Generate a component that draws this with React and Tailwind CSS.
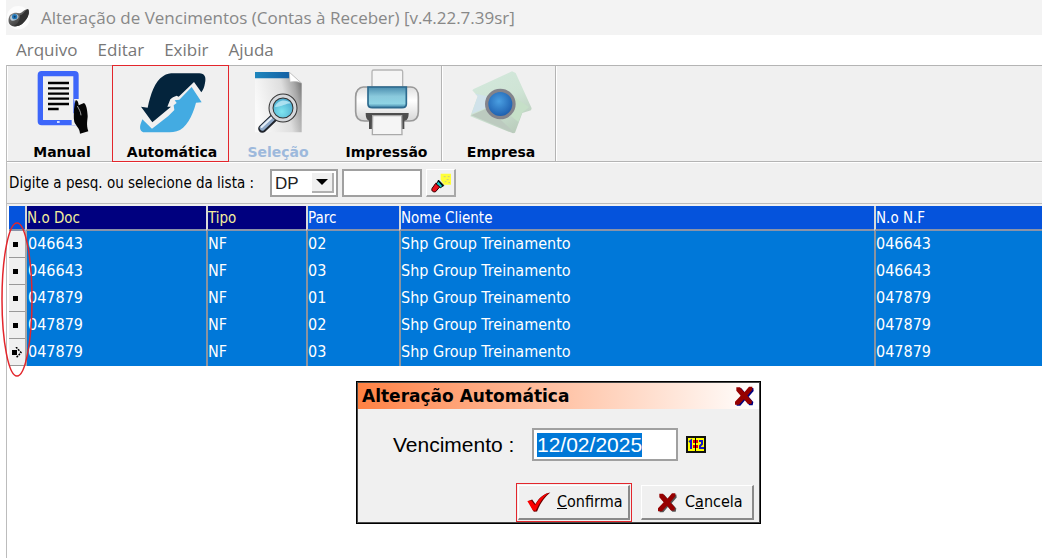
import { useEffect, useRef } from "react";

const TAHOMA = "font-['DejaVu_Sans_Condensed','DejaVu_Sans',sans-serif]";
const TAHOMA_WIDE = "font-['DejaVu_Sans',sans-serif]";
const SEGOE = "font-['Open_Sans','Noto_Sans',sans-serif]";
const ARIAL = "font-['Liberation_Sans',sans-serif]";

const rows = [
  ["046643", "NF", "02", "Shp Group Treinamento", "046643"],
  ["046643", "NF", "03", "Shp Group Treinamento", "046643"],
  ["047879", "NF", "01", "Shp Group Treinamento", "047879"],
  ["047879", "NF", "02", "Shp Group Treinamento", "047879"],
  ["047879", "NF", "03", "Shp Group Treinamento", "047879"],
];

function AppLogo() {
  return (
    <svg viewBox="20 16 72 72" className="h-6 w-6" aria-hidden="true">
      <defs>
        <linearGradient id="logoBody" x1="0" y1="0" x2="0.7" y2="1">
          <stop offset="0" stopColor="#c4c4c4" />
          <stop offset="0.4" stopColor="#6a6a6a" />
          <stop offset="1" stopColor="#2a2a2a" />
        </linearGradient>
      </defs>
      <circle cx="57" cy="51" r="35" fill="#fcfcfc" />
      <path d="M29 50C32 38 48 34 60 38C70 36 74 26 86 25C93 34 86 56 68 70C54 80 34 80 29 68C27 62 27 56 29 50Z" fill="url(#logoBody)" />
      <path d="M62 44C72 42 76 30 86 25C93 34 86 56 68 70C60 76 50 78 44 76C56 70 62 58 62 44Z" fill="#333" />
      <ellipse cx="45" cy="50" rx="13" ry="9" transform="rotate(-25 45 50)" fill="#b9c9d4" />
      <circle cx="46" cy="48" r="8" fill="#2377b8" />
      <circle cx="46" cy="48" r="3" fill="#0d3b66" />
    </svg>
  );
}

function ManualIcon() {
  return (
    <svg viewBox="96 207 180 201" className="h-[67px] w-[60px]" aria-hidden="true">
      <rect x="121" y="221" width="107" height="147" rx="4" fill="#f0f0f0" stroke="#3d66fa" strokeWidth="16" />
      <path d="M121 360H228V370H121Z" fill="#3d66fa" />
      <path d="M144 249H207M144 265H207M144 281H207M144 296H207M144 312H207M144 327H176" stroke="#000" strokeWidth="7" />
      <path d="M171 366h8" stroke="#cfd9ff" strokeWidth="6" />
      <path d="M222 297H245V340H215V375H238" fill="#f0f0f0" />
      <path d="M226 302C232 298 235 306 236 316L252 309C259 312 262 332 263 348C263 360 258 372 265 394L240 401C240 386 228 378 223 366C220 354 222 340 222 328Z" fill="#050505" />
      <path d="M232 318C237 328 242 334 243 346" stroke="#eee" strokeWidth="2" fill="none" />
    </svg>
  );
}

function AutomaticIcon() {
  return (
    <svg viewBox="408 207 219 201" className="h-[67px] w-[73px]" aria-hidden="true">
      <path d="M423 320L443 323C452 282 464 244 490 228C500 221 510 220 522 220H598C614 220 619 232 615 249C613 262 609 270 604 277L582 246L536 290L530 287L519 292L511 298L502 320H513L457 367Z" fill="#04243c" />
      <path d="M575 261L605 307L588 308C577 350 558 385 530 394C523 396 516 397 508 397H434C421 397 417 384 423 369L427 358L456 386L505 348L523 330L521 316L530 309L524 301L538 299Z" fill="#43abe2" />
    </svg>
  );
}

function SelectionIcon() {
  return (
    <svg viewBox="67 207 165 201" className="h-[67px] w-[55px]" aria-hidden="true">
      <defs>
        <linearGradient id="selPage" x1="0" y1="0.5" x2="1" y2="0.2">
          <stop offset="0" stopColor="#fafafa" />
          <stop offset="0.6" stopColor="#dedede" />
          <stop offset="0.85" stopColor="#a8a8a8" />
          <stop offset="1" stopColor="#777" />
        </linearGradient>
        <linearGradient id="selBar" x1="0" x2="1">
          <stop offset="0" stopColor="#1e86bd" />
          <stop offset="1" stopColor="#1460a4" />
        </linearGradient>
        <radialGradient id="selLens" cx="0.45" cy="0.65" r="0.6">
          <stop offset="0" stopColor="#7fe5f0" />
          <stop offset="1" stopColor="#48a5cb" />
        </radialGradient>
      </defs>
      <path d="M79 216H182L219 250V397H79Z" fill="url(#selPage)" />
      <path d="M79 216H182V235H79Z" fill="url(#selBar)" />
      <path d="M182 217L218 249C205 243 192 244 184 246Z" fill="#fff" stroke="#bbb" strokeWidth="2" />
      <path d="M137 352L101 386" stroke="#20242c" strokeWidth="25" strokeLinecap="round" />
      <path d="M137 350L101 384" stroke="#8fa9c8" strokeWidth="16" strokeLinecap="round" />
      <path d="M131 351L99 381" stroke="#e7eff8" strokeWidth="6" strokeLinecap="round" />
      <circle cx="163" cy="324" r="36" fill="url(#selLens)" stroke="#333" strokeWidth="15" />
      <circle cx="163" cy="324" r="36" fill="none" stroke="#d5d8dc" strokeWidth="9" />
      <path d="M139 321C145 302 169 294 187 310C171 310 158 322 139 321Z" fill="#b9e6f4" opacity="0.85" />
    </svg>
  );
}

function PrinterIcon() {
  return (
    <svg viewBox="370 207 204 201" className="h-[67px] w-[68px]" aria-hidden="true">
      <defs>
        <linearGradient id="prnBody" x1="0" y1="0" x2="0" y2="1">
          <stop offset="0" stopColor="#dedede" />
          <stop offset="0.4" stopColor="#fff" />
          <stop offset="1" stopColor="#d6d6d6" />
        </linearGradient>
        <linearGradient id="prnGlass" x1="0" y1="0" x2="0" y2="1">
          <stop offset="0" stopColor="#4a8dae" />
          <stop offset="0.45" stopColor="#8ac9dc" />
          <stop offset="0.8" stopColor="#8fd4e4" />
          <stop offset="1" stopColor="#3d82a6" />
        </linearGradient>
      </defs>
      <rect x="427" y="210" width="92" height="70" rx="5" fill="#f5f5f5" stroke="#b5b5b5" strokeWidth="4" />
      <path d="M401 261H543C558 261 566 274 566 290V335C566 353 556 363 540 363H405C388 363 378 354 378 335V290C378 274 388 261 401 261Z" fill="url(#prnBody)" stroke="#999" strokeWidth="5" />
      <path d="M408 339H537C537 355 532 362 524 362V387H418V362C411 360 408 352 408 339Z" fill="#4d4d4d" />
      <path d="M429 347H516L517 404H428Z" fill="#f5f5f5" stroke="#aaa" strokeWidth="4" />
      <path d="M415 261H530V312C530 319 525 323 517 323H428C420 323 415 319 415 312Z" fill="url(#prnGlass)" stroke="#2d6a8e" strokeWidth="5" />
    </svg>
  );
}

function CompanyIcon() {
  return (
    <svg viewBox="6 6 204 201" className="h-[67px] w-[68px]" aria-hidden="true">
      <defs>
        <linearGradient id="coHouse" x1="0.2" y1="0" x2="0.7" y2="1">
          <stop offset="0" stopColor="#d3e8dc" />
          <stop offset="0.5" stopColor="#cfe4d5" />
          <stop offset="1" stopColor="#b9ccbb" />
        </linearGradient>
        <radialGradient id="coEye" cx="0.45" cy="0.4" r="0.65">
          <stop offset="0" stopColor="#4a9fe2" />
          <stop offset="1" stopColor="#1654a6" />
        </radialGradient>
      </defs>
      <path d="M141 13L152 18L200 124L198 130L172 138L150 197L144 199L16 148L38 88L22 70L26 66Z" fill="url(#coHouse)" />
      <path d="M38 88L30 80L90 92L70 120L20 140Z" fill="#d0e2ea" />
      <path d="M18 145L70 122L148 198Z" fill="#bccabf" />
      <path d="M146 90L192 120L171 137L160 165L130 140Z" fill="#c6e0c8" />
      <circle cx="106" cy="111" r="41" fill="url(#coEye)" stroke="#83838b" strokeWidth="10" />
    </svg>
  );
}

function FlashlightIcon() {
  return (
    <svg viewBox="508 38 66 64" className="h-[22px] w-[22px]" aria-hidden="true">
      <path d="M540 42H571V75H549L540 60Z" fill="#ffff37" />
      <path d="M549 51h6m6 0h6m-9 9h6m-12 6h5m6 3h5" stroke="#c9c98a" strokeWidth="3" />
      <path d="M534 62L549 77L540 84L526 74Z" fill="#1cc" stroke="#000" strokeWidth="3" />
      <path d="M525 71L537 82L525 96C517 99 510 92 515 85Z" fill="#e8101c" stroke="#2a0000" strokeWidth="3" />
      <path d="M532 62L548 80" stroke="#000" strokeWidth="4" />
    </svg>
  );
}

function CrossIcon({ shadow, className }) {
  return (
    <svg viewBox="0 0 60 60" className={className} aria-hidden="true">
      <path d="M12 7H22L35 22L49 6H58L59 15L44 32L58 48L56 58H46L33 43L19 59H8L7 50L24 32L12 17Z" fill={shadow} />
      <path d="M7 4H18L31 19L45 2H55V11L40 29L54 45L52 54H42L30 40L15 56H3V47L20 29L7 14Z" fill="#960000" />
    </svg>
  );
}

function CheckIcon() {
  return (
    <svg viewBox="528 349 74 66" className="h-[22px] w-6" aria-hidden="true">
      <path d="M532 379L544 374L554 388C566 369 580 356 600 353C582 368 570 385 559 411L549 412Z" fill="#6b0000" />
      <path d="M529 379L541 377L553 392C564 372 577 360 594 354C577 368 565 386 555 409L546 408Z" fill="#fb0000" />
    </svg>
  );
}

function CalendarIcon() {
  return (
    <svg viewBox="0 0 20 17" className="h-[17px] w-5" aria-hidden="true">
      <rect x="1" y="1" width="18" height="15" fill="#ffff00" stroke="#111" strokeWidth="2" />
      <path d="M3 6L5 4.500V13" fill="none" stroke="#1616c8" strokeWidth="2" />
      <path d="M13 5H16V8L14 10V12H18" fill="none" stroke="#1616c8" strokeWidth="2" />
      <path d="M7 4H12V7H7ZM7 9H12V12H7Z" fill="#e50000" />
      <path d="M9.500 2V15" stroke="#000" />
    </svg>
  );
}

function ToolButton({ label, icon, className = "", labelClass = "text-black", disabled, children }) {
  return (
    <button type="button" disabled={disabled} className={`relative flex flex-col items-center pt-[3px] ${className}`}>
      <span className="flex h-[67px] items-center">{icon}</span>
      <span className={`mt-1.5 text-[14px] leading-5 font-bold ${TAHOMA_WIDE} ${labelClass}`}>{label}</span>
      {children}
    </button>
  );
}

function HeaderCell({ children, className }) {
  return (
    <th scope="col" className={`border-b-2 border-l-2 border-b-[#8a93a8] border-l-[#d8d8d8] p-0 text-left font-normal ${className}`}>
      {children}
    </th>
  );
}

function RecordsTable() {
  return (
    <div className="relative pl-0.5">
      <table className="w-full table-fixed border-separate border-spacing-0 text-[16px] leading-5 text-white">
        <colgroup>
          <col className="w-4" />
          <col className="w-[181px]" />
          <col className="w-[100px]" />
          <col className="w-[93px]" />
          <col className="w-[475px]" />
          <col />
        </colgroup>
        <thead className="text-[15px]">
          <tr className="h-[25px]">
            <td className="border-b-2 border-b-[#8a93a8] bg-[#0553dc] p-0" />
            <HeaderCell className="bg-[#00007f] text-[#f3ee9c]">N.o Doc</HeaderCell>
            <HeaderCell className="bg-[#00007f] text-[#f3ee9c]">Tipo</HeaderCell>
            <HeaderCell className="bg-[#0553dc]">Parc</HeaderCell>
            <HeaderCell className="bg-[#0553dc]">Nome Cliente</HeaderCell>
            <HeaderCell className="bg-[#0553dc]">N.o N.F</HeaderCell>
          </tr>
        </thead>
        <tbody>
          {rows.map((row, r) => (
            <tr key={r} className="h-[27px] bg-[#0078d9]">
              <td className="border-b border-b-[#999] bg-[#f0f0f0] p-0">
                {r === rows.length - 1 ? (
                  <svg viewBox="0 0 11 11" className="ml-[3px] h-[11px] w-[11px]" aria-hidden="true">
                    <path d="M0 3H5V8H0Z" fill="#000" />
                    <path d="M4 0L9 5.500L4 11" fill="none" stroke="#000" strokeWidth="1.500" strokeDasharray="2 1" />
                  </svg>
                ) : (
                  <span className="ml-1 block h-[5px] w-[5px] bg-black" />
                )}
              </td>
              {row.map((cell, c) => (
                <td key={c} className={`border-l-2 p-0 pb-0.5 ${c === 0 ? "border-l-[#a8a8a8] pl-px" : "border-l-[#8a93a0]"}`}>
                  {cell}
                </td>
              ))}
            </tr>
          ))}
        </tbody>
      </table>
      <svg viewBox="0 0 32 155" className="pointer-events-none absolute top-4 -left-[6px] h-[155px] w-8" aria-hidden="true">
        <ellipse cx="16" cy="77.500" rx="15" ry="76.500" fill="none" stroke="#e3262c" strokeWidth="1.500" />
      </svg>
    </div>
  );
}

function DueDateDialog() {
  const dateRef = useRef(null);
  useEffect(() => {
    dateRef.current.focus();
    dateRef.current.select();
  }, []);
  const raised = "flex h-[35px] items-center border-t border-l border-r-2 border-b-2 border-t-white border-l-white border-r-[#8a8a8a] border-b-[#8a8a8a] bg-[#f0f0f0] text-[16px]";
  return (
    <section
      role="dialog"
      aria-labelledby="dialog-title"
      className="absolute top-[381px] left-[356px] w-[405px] border border-black bg-[#f0f0f0] outline-1 -outline-offset-2 outline-black/70"
    >
      <header className="m-px flex h-[26px] items-center justify-between bg-linear-to-r from-[#ff8142] to-white pr-[5px] pl-1">
        <h2 id="dialog-title" className={`text-[17px] leading-6 font-bold text-black ${TAHOMA_WIDE}`}>Alteração Automática</h2>
        <button type="button" aria-label="Fechar">
          <CrossIcon shadow="#000080" className="h-5 w-5" />
        </button>
      </header>
      <div className={`mt-[19px] flex items-center pl-9 ${ARIAL}`}>
        <label htmlFor="due" className="w-[139px] text-[21px] leading-8 text-black">Vencimento :</label>
        <input
          id="due"
          ref={dateRef}
          defaultValue="12/02/2025"
          className="h-[33px] w-[146px] border-2 border-[#a0a0a0] bg-white px-[3px] text-[21px] leading-6 text-black outline-none selection:bg-[#0078d7] selection:text-white"
        />
        <button type="button" aria-label="Calendário" className="ml-2">
          <CalendarIcon />
        </button>
      </div>
      <footer className="mt-[22px] flex items-center justify-end gap-[9px] pr-1.5 pb-px">
        <div className="border border-[#e3262c] p-px">
          <button type="button" className={`${raised} w-[112px] gap-1.5 pl-2`}>
            <CheckIcon />
            <span><u>C</u>onfirma</span>
          </button>
        </div>
        <button type="button" className={`${raised} w-[113px] gap-2 pl-[15px]`}>
          <CrossIcon shadow="#555" className="h-[21px] w-5" />
          <span>C<u>a</u>ncela</span>
        </button>
      </footer>
    </section>
  );
}

export default function App() {
  return (
    <div className={`relative min-h-screen overflow-hidden bg-white pl-1.5 text-black ${TAHOMA}`}>
      <header className={`flex h-[35px] items-center gap-[11px] bg-[#f3f3f3] text-[17px] text-[#888] ${SEGOE}`}>
        <AppLogo />
        <h1>Alteração de Vencimentos (Contas à Receber) [v.4.22.7.39sr]</h1>
      </header>
      <nav className={`flex h-[30px] items-center gap-5 pl-[10px] text-[17px] text-[#777] ${SEGOE}`}>
        <button type="button">Arquivo</button>
        <button type="button">Editar</button>
        <button type="button">Exibir</button>
        <button type="button">Ajuda</button>
      </nav>
      <main className="border-l border-[#bcbcbc]">
        <div className="flex h-[97px] border-y border-[#b4b4b4] bg-[#f0f0f0]">
          <ToolButton label="Manual" icon={<ManualIcon />} className="w-[105px] border-l border-white pl-1" />
          <ToolButton label="Automática" icon={<AutomaticIcon />} className="w-[117px] pl-[3px]">
            <span className="pointer-events-none absolute -inset-y-px inset-x-0 border border-[#e3262c]" />
          </ToolButton>
          <ToolButton label="Seleção" icon={<SelectionIcon />} className="w-[98px]" labelClass="text-[#9db9dc]" disabled />
          <ToolButton label="Impressão" icon={<PrinterIcon />} className="w-[115px] border-r border-[#b4b4b4] pl-[5px]" />
          <ToolButton label="Empresa" icon={<CompanyIcon />} className="w-[114px] border-x border-l-white border-r-[#b4b4b4] pl-1" />
          <div className="border-l border-white" />
        </div>
        <form className="flex h-[41px] items-center border-t border-white bg-[#f0f0f0] pl-0.5" onSubmit={(e) => e.preventDefault()}>
          <label htmlFor="kind" className="w-[261px] text-[15px]">Digite a pesq. ou selecione da lista :</label>
          <div className="relative">
            <select id="kind" className={`h-7 w-[68px] appearance-none border-2 border-[#a0a0a0] bg-white pl-[3px] text-[17px] text-[#222] ${ARIAL}`}>
              <option>DP</option>
            </select>
            <span className="pointer-events-none absolute top-1 right-1 flex h-5 w-[22px] items-center justify-center border-r-2 border-b-2 border-[#b0b0b0] bg-[#f0f0f0]">
              <svg viewBox="0 0 12 6" className="h-1.5 w-3" aria-hidden="true"><path d="M0 0H12L6 6Z" fill="#000" /></svg>
            </span>
          </div>
          <input aria-label="Pesquisa" className="ml-1 h-7 w-20 border-2 border-[#a0a0a0] bg-white px-1" />
          <button type="button" aria-label="Pesquisar" className="ml-1 flex h-7 w-[30px] items-center justify-center border-t border-l border-r-2 border-b-2 border-t-white border-l-white border-r-[#a8a8a8] border-b-[#a8a8a8]">
            <FlashlightIcon />
          </button>
        </form>
        <div className="min-h-[355px] border-t border-[#bcbcbc]">
          <div className="h-0.5 bg-[#f0f0f0]" />
          <RecordsTable />
        </div>
      </main>
      <DueDateDialog />
    </div>
  );
}
